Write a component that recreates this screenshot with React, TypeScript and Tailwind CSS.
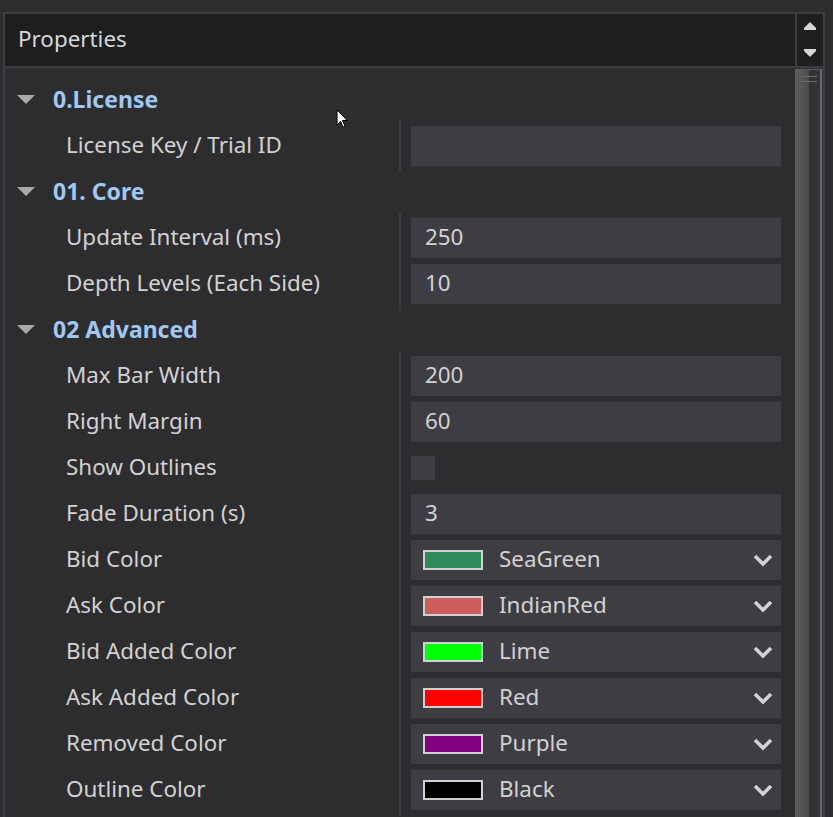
import React from "react";

type Prop =
  | { label: string; kind: "text"; value: string }
  | { label: string; kind: "check" }
  | { label: string; kind: "color"; color: string; name: string };

type Group = { title: string; props: Prop[] };

const groups: Group[] = [
  {
    title: "0.License",
    props: [{ label: "License Key / Trial ID", kind: "text", value: "" }],
  },
  {
    title: "01. Core",
    props: [
      { label: "Update Interval (ms)", kind: "text", value: "250" },
      { label: "Depth Levels (Each Side)", kind: "text", value: "10" },
    ],
  },
  {
    title: "02 Advanced",
    props: [
      { label: "Max Bar Width", kind: "text", value: "200" },
      { label: "Right Margin", kind: "text", value: "60" },
      { label: "Show Outlines", kind: "check" },
      { label: "Fade Duration (s)", kind: "text", value: "3" },
      { label: "Bid Color", kind: "color", color: "#2e8b57", name: "SeaGreen" },
      { label: "Ask Color", kind: "color", color: "#cd5c5c", name: "IndianRed" },
      { label: "Bid Added Color", kind: "color", color: "#00ff00", name: "Lime" },
      { label: "Ask Added Color", kind: "color", color: "#ff0000", name: "Red" },
      { label: "Removed Color", kind: "color", color: "#800080", name: "Purple" },
      { label: "Outline Color", kind: "color", color: "#000000", name: "Black" },
    ],
  },
];

function Expander() {
  return (
    <svg width="18" height="10" viewBox="0 0 18 10" className="shrink-0">
      <polygon points="0,0 18,0 9,9" fill="#a9a9a9" />
    </svg>
  );
}

function Chevron() {
  return (
    <svg width="20" height="14" viewBox="0 0 20 14" className="shrink-0">
      <polyline
        points="2,3 10,11 18,3"
        fill="none"
        stroke="#d2d2d2"
        strokeWidth="3.6"
      />
    </svg>
  );
}

function Value({ prop }: { prop: Prop }) {
  if (prop.kind === "check") {
    return (
      <div className="h-[46px] flex items-center pl-[10px]">
        <div className="w-[24px] h-[24px] bg-[#3e3d44]" />
      </div>
    );
  }
  return (
    <div className="h-[46px] py-[3px] pl-[10px] pr-[14px]">
      <div className="h-full bg-[#3e3d44] flex items-center">
        {prop.kind === "text" ? (
          <span className="pl-[14px] pb-px">{prop.value}</span>
        ) : (
          <>
            <div
              className="ml-[12px] w-[60px] h-[20px] border-2 border-[#d0d0d0]"
              style={{ backgroundColor: prop.color }}
            />
            <span className="ml-[16px] pb-px flex-1">{prop.name}</span>
            <div className="mr-[8px]">
              <Chevron />
            </div>
          </>
        )}
      </div>
    </div>
  );
}

function Section({ group }: { group: Group }) {
  return (
    <div>
      <div className="h-[46px] flex items-center pl-[12px] gap-[18px]">
        <Expander />
        <span className="pb-px font-bold text-[23px] text-[#a0c8f0]">{group.title}</span>
      </div>
      <div className="flex">
        <div className="w-[394px] flex flex-col">
          {group.props.map((p) => (
            <div key={p.label} className="h-[46px] flex items-center pl-[61px] pb-px">
              {p.label}
            </div>
          ))}
        </div>
        <div className="w-[2px] -my-[3px] bg-[#3a3a3f]" />
        <div className="flex-1 flex flex-col">
          {group.props.map((p) => (
            <Value key={p.label} prop={p} />
          ))}
        </div>
      </div>
    </div>
  );
}

function Cursor() {
  return (
    <svg
      width="13"
      height="20"
      viewBox="0 0 13 20"
      className="absolute left-[336px] top-[109px]"
    >
      <path
        d="M1 1 L1 16 L4.5 12.5 L7 18 L9 17 L6.5 11.5 L11.5 11.5 Z"
        fill="#ffffff"
        stroke="#000000"
        strokeWidth="1"
      />
    </svg>
  );
}

export default function App() {
  return (
    <div
      className="relative w-[833px] h-[817px] overflow-hidden bg-[#2d2d30] pt-[12px] pl-[3px] text-[22.4px] text-[#d2d2d2] leading-none"
      style={{ fontFamily: '"Noto Sans", "Open Sans", sans-serif' }}
    >
      <div className="w-[822px] h-[805px] border-t-2 border-x-2 border-[#3c3c41] flex flex-col">
        <div className="h-[52px] flex bg-[#1e1e1e]">
          <div className="flex-1 flex items-center pl-[13px] pb-px text-[#d4d8de]">
            Properties
          </div>
          <div className="w-[2px] bg-[#3c3c41]" />
          <div className="w-[26px] flex flex-col items-center justify-between py-[8px]">
            <svg width="14" height="9" viewBox="0 0 14 9">
              <polygon points="7,0 13,6 13,8 1,8 1,6" fill="#d6d6d6" />
            </svg>
            <svg width="14" height="9" viewBox="0 0 14 9">
              <polygon points="1,0 13,0 13,2 7,8 1,2" fill="#d6d6d6" />
            </svg>
          </div>
        </div>
        <div className="h-[2px] bg-[#3c3c41]" />
        <div className="flex-1 flex min-h-0">
          <div className="w-[790px] pt-[9px]">
            {groups.map((g) => (
              <Section key={g.title} group={g} />
            ))}
          </div>
          <div className="w-[28px] pt-px">
            <div className="relative h-full flex border-t border-[#5c5c60] bg-[#333336]">
              <div className="w-[14px] bg-gradient-to-r from-[#5e5e61] to-[#4b4b4e]" />
              <div className="flex-1" />
              <div className="w-[2px] bg-[#6a6a6d]" />
              <div className="w-px" />
              <div className="absolute left-[6px] top-[6px] w-[16px] h-px bg-[#6a6a6d]" />
              <div className="absolute left-[6px] top-[11px] w-[16px] h-px bg-[#6a6a6d]" />
            </div>
          </div>
        </div>
      </div>
      <Cursor />
    </div>
  );
}
